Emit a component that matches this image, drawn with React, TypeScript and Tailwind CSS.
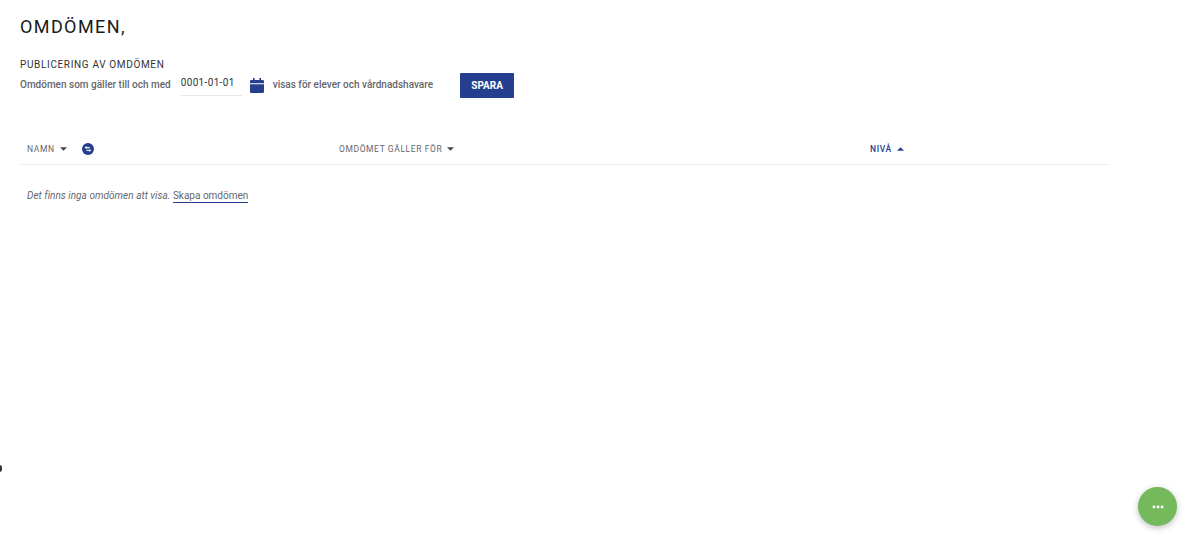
import { MoreHorizontal } from "lucide-react";

const BLUE = "#253f8e";

function Caret({ up, color }: { up?: boolean; color: string }) {
  return (
    <svg width="7" height="4" viewBox="0 0 8 4" className="ml-[5px]">
      <path d={up ? "M0 4L4 0L8 4Z" : "M0 0L8 0L4 4Z"} fill={color} />
    </svg>
  );
}

function CalendarIcon() {
  return (
    <svg width="14" height="15" viewBox="0 0 14 16" preserveAspectRatio="none" className="block">
      <path
        fill={BLUE}
        d="M3 0h1.6v2h4.8V0H11v2h1.5A1.5 1.5 0 0 1 14 3.5V5.6H0V3.5A1.5 1.5 0 0 1 1.5 2H3zM0 6.6h14v8A1.4 1.4 0 0 1 12.6 16H1.4A1.4 1.4 0 0 1 0 14.6z"
      />
    </svg>
  );
}

function SwapIcon() {
  return (
    <svg width="12" height="12" viewBox="0 0 12 12" className="block">
      <circle cx="6" cy="6" r="6" fill={BLUE} />
      <path d="M2.6 4.6L4.6 3v1h3v1.2h-3v1z" fill="#fff" />
      <path d="M9.4 7.4L7.4 9V8h-3V6.8h3v-1z" fill="#dfe5f3" />
    </svg>
  );
}

export default function App() {
  return (
    <div className="relative h-[551px] w-[1200px] overflow-hidden bg-white font-['Roboto',sans-serif]">
      <div className="pl-5 pt-[15px] w-[1110px]">
        <h1 className="text-[18px] leading-[24px] tracking-[1.4px] text-[#1a1a1a]">OMDÖMEN,</h1>

        <div className="mt-[20px] text-[10px] leading-[12px] tracking-[0.65px] text-[#333]">
          PUBLICERING AV OMDÖMEN
        </div>

        <div className="mt-[1px] flex h-[26px] items-center text-[10px] font-medium text-[#66666c]">
          <span className="leading-[14px]">Omdömen som gäller till och med</span>
          <div className="ml-[10px] h-[24px] w-[61px] self-start border-b border-[#e8e8e8] pt-[4px] text-[10px] font-normal leading-[14px] tracking-[0.35px] text-[#333]">
            0001-01-01
          </div>
          <div className="ml-[8px]">
            <CalendarIcon />
          </div>
          <span className="ml-[9px] leading-[14px]">visas för elever och vårdnadshavare</span>
          <button className="ml-[27px] h-[25px] w-[54px] rounded-[1px] bg-[#253f8e] text-[10px] font-bold text-white">
            SPARA
          </button>
        </div>

        <div className="mt-[36px] flex h-[31px] items-center border-b border-[#eeeeee] text-[8.5px] tracking-[0.6px] text-[#66666c]">
          <div className="flex w-[312px] items-center pl-[7px]">
            <span>NAMN</span>
            <Caret color="#444" />
            <div className="ml-[15px]">
              <SwapIcon />
            </div>
          </div>
          <div className="flex w-[531px] items-center pl-[7px]">
            <span>OMDÖMET GÄLLER FÖR</span>
            <Caret color="#444" />
          </div>
          <div className="flex items-center pl-[7px] font-medium text-[#253f8e]">
            <span>NIVÅ</span>
            <Caret up color="#253f8e" />
          </div>
        </div>

        <div className="mt-[24px] pl-[7px] text-[10px] leading-[14px] tracking-[0.03px] text-[#66666c]">
          <span className="italic">Det finns inga omdömen att visa.</span>{" "}
          <a className="inline-block border-b border-[#253f8e] leading-[12px] tracking-[0px]">Skapa omdömen</a>
        </div>
      </div>

      <div className="absolute left-[-3px] top-[465px] h-[7px] w-[5px] rounded-full bg-[#333]" />

      <button className="absolute left-[1138px] top-[487px] flex h-[39px] w-[39px] items-center justify-center rounded-full bg-[#74b95c] text-white shadow-[0_2px_6px_rgba(0,0,0,0.25)]">
        <MoreHorizontal size={14} strokeWidth={3} />
      </button>
    </div>
  );
}
